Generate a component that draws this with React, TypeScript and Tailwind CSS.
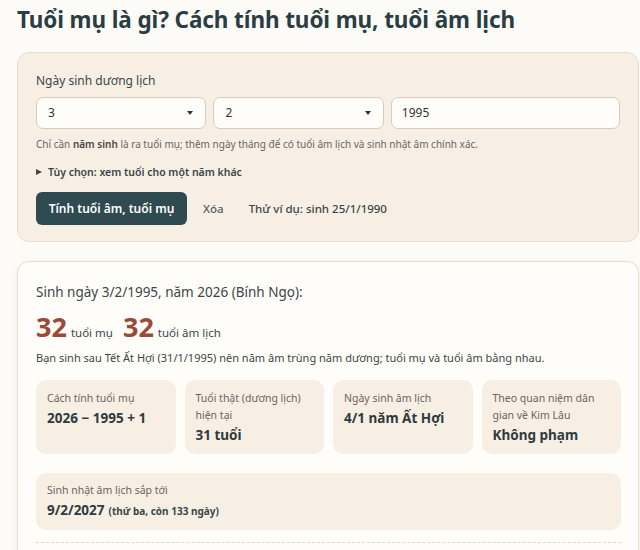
const font = { fontFamily: '"Noto Sans", "Open Sans", sans-serif' }

const stats = [
  { label: "Cách tính tuổi mụ", value: "2026 − 1995 + 1" },
  { label: "Tuổi thật (dương lịch) hiện tại", value: "31 tuổi" },
  { label: "Ngày sinh âm lịch", value: "4/1 năm Ất Hợi" },
  { label: "Theo quan niệm dân gian về Kim Lâu", value: "Không phạm" },
]

const SelectBox = ({ value }: { value: string }) => (
  <div className="flex h-[32px] w-[171px] items-center justify-between rounded-[7px] border border-[#d9cbb8] bg-[#fffdf9] pl-[11px] pr-[12px] text-[12px] text-[#333]">
    <span>{value}</span>
    <span className="h-0 w-0 border-x-[3.5px] border-t-[4px] border-x-transparent border-t-[#333]" />
  </div>
)

const App = () => {
  return (
    <div
      className="min-h-[550px] w-[640px] overflow-hidden bg-[#fdfbf7] pl-[17px] pr-[1px] text-[#2f3b3f]"
      style={font}
    >
      <h1 className="pt-[3px] text-[22.5px] font-bold leading-[34px] tracking-[-0.1px] text-[#2a3d43]">
        Tuổi mụ là gì? Cách tính tuổi mụ, tuổi âm lịch
      </h1>

      <div className="mt-[15px] rounded-[12px] border border-[#eadccb] bg-[#f7efe4] px-[18px] pb-[16px] pt-[19px]">
        <div className="text-[12px] leading-[18px] text-[#3a4649]">Ngày sinh dương lịch</div>
        <div className="mt-[7px] flex gap-[7px]">
          <SelectBox value="3" />
          <SelectBox value="2" />
          <div className="flex h-[32px] w-[230px] items-center rounded-[7px] border border-[#d9cbb8] bg-[#fffdf9] pl-[10px] text-[12px] text-[#333]">
            1995
          </div>
        </div>
        <p className="mt-[6px] text-[10px] leading-[18px] text-[#6a6560]">
          Chỉ cần <b className="font-semibold text-[#4a4540]">năm sinh</b> là ra tuổi mụ; thêm ngày tháng để có tuổi âm lịch và sinh nhật âm chính xác.
        </p>
        <div className="mt-[11px] flex items-center gap-[6px] text-[10.5px] font-semibold leading-[16px] text-[#3a4649]">
          <span className="h-0 w-0 border-y-[3.5px] border-l-[6px] border-y-transparent border-l-[#3a4649]" />
          Tùy chọn: xem tuổi cho một năm khác
        </div>
        <div className="mt-[12px] flex items-center">
          <button className="h-[33px] w-[151px] rounded-[6px] bg-[#2f4a50] text-[12px] font-semibold text-white">
            Tính tuổi âm, tuổi mụ
          </button>
          <span className="ml-[16px] text-[11.5px] font-medium text-[#5a6366]">Xóa</span>
          <span className="ml-[25px] text-[11.5px] font-medium text-[#3a4649]">Thử ví dụ: sinh 25/1/1990</span>
        </div>
      </div>

      <div className="mt-[19px] rounded-t-[12px] border border-[#eadccb] bg-[#fffdf9] px-[18px] pb-[10px] pt-[19px] shadow-[0_2px_8px_rgba(120,90,50,0.06)]">
        <div className="text-[13.5px] leading-[22px] text-[#3a4649]">Sinh ngày 3/2/1995, năm 2026 (Bính Ngọ):</div>
        <div className="mt-[7px] flex items-baseline">
          <span className="text-[27px] font-bold leading-[34px] text-[#9b4a38]">32</span>
          <span className="ml-[4px] text-[11.5px] text-[#3a4649]">tuổi mụ</span>
          <span className="ml-[10px] text-[27px] font-bold leading-[34px] text-[#9b4a38]">32</span>
          <span className="ml-[4px] text-[11.5px] text-[#3a4649]">tuổi âm lịch</span>
        </div>
        <p className="mt-[5px] text-[11px] leading-[18px] text-[#3a4649]">
          Bạn sinh sau Tết Ất Hợi (31/1/1995) nên năm âm trùng năm dương; tuổi mụ và tuổi âm bằng nhau.
        </p>
        <div className="mt-[13px] grid w-[585px] grid-cols-4 gap-[9px]">
          {stats.map((s) => (
            <div key={s.label} className="h-[74px] rounded-[10px] bg-[#f7efe4] px-[11px] pt-[10px]">
              <div className="text-[10.5px] leading-[17px] text-[#6a6560]">{s.label}</div>
              <div className="mt-[1px] text-[13.5px] font-bold leading-[20px] text-[#2f3b3f]">{s.value}</div>
            </div>
          ))}
        </div>
        <div className="mt-[19px] h-[57px] w-[585px] rounded-[10px] bg-[#f7efe4] px-[11px] pt-[9px]">
          <div className="text-[10.5px] leading-[17px] text-[#6a6560]">Sinh nhật âm lịch sắp tới</div>
          <div className="mt-[1px] flex items-baseline gap-[4px]">
            <span className="text-[13.5px] font-bold leading-[20px] text-[#2f3b3f]">9/2/2027</span>
            <span className="text-[10px] font-bold text-[#3a4649]">(thứ ba, còn 133 ngày)</span>
          </div>
        </div>
        <div className="mt-[12px] w-[585px] border-t border-dashed border-[#e3d6c5]" />
      </div>
    </div>
  )
}

export default App
